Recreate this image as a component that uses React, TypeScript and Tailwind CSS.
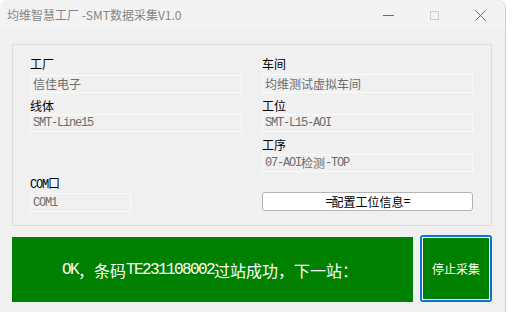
import React from 'react';

const cjk = "font-['Noto_Sans_CJK_SC',sans-serif]";

// SimSun-like look: ASCII runs in a half-width mono, CJK in Noto
function Mixed({ text }: { text: string }) {
  const parts = text.split(/([\x20-\x7e]+)/).filter(Boolean);
  return (
    <>
      {parts.map((p, i) =>
        /^[\x20-\x7e]+$/.test(p) ? (
          <span key={i} className="font-['Liberation_Mono',monospace] tracking-[-0.1em]">{p}</span>
        ) : (
          <span key={i}>{p}</span>
        )
      )}
    </>
  );
}

function Label({ text, className = '' }: { text: string; className?: string }) {
  return (
    <div className={`h-[12px] text-[12px] leading-[12px] text-black whitespace-nowrap ${className}`}>
      <Mixed text={text} />
    </div>
  );
}

function Field({ text, className = '' }: { text: string; className?: string }) {
  return (
    <div className={`h-[18px] border border-[#fafafa] bg-[#f0f0f0] pl-[2px] flex items-center text-[12px] leading-[12px] text-[#6d6d6d] whitespace-nowrap ${className}`}>
      <Mixed text={text} />
    </div>
  );
}

export default function App() {
  return (
    <div className={`w-[518px] h-[312px] bg-white overflow-hidden ${cjk}`}>
      <div className="w-[506px] h-[312px] bg-[#f0f0f0] border-r border-[#cfcfcf] rounded-t-[8px] overflow-hidden flex flex-col">
        {/* title bar */}
        <div className="h-[30px] bg-[#f3f3f3] flex items-center">
          <div className="pl-[7px] text-[12px] text-[#858585] whitespace-nowrap">均维智慧工厂 -SMT数据采集V1.0</div>
          <div className="ml-auto flex items-center h-full">
            <div className="w-[46px] h-full flex items-center justify-center">
              <div className="w-[11px] h-px bg-[#6a6a6a]" />
            </div>
            <div className="w-[46px] h-full flex items-center justify-center">
              <div className="w-[9px] h-[9px] border border-[#cfcfcf]" />
            </div>
            <div className="w-[46px] h-full flex items-center justify-center mr-[2px]">
              <svg width="11" height="11" viewBox="0 0 11 11">
                <path d="M0.5 0.5 L10.5 10.5 M10.5 0.5 L0.5 10.5" stroke="#6a6a6a" strokeWidth="1" fill="none" />
              </svg>
            </div>
          </div>
        </div>

        {/* group box */}
        <div className="ml-[12px] mt-[14px] w-[480px] h-[182px] border border-[#dcdcdc] pt-[13px] pl-[17px] flex gap-[20px]">
          <div className="w-[212px] flex flex-col">
            <Label text="工厂" />
            <Field text="信佳电子" className="mt-[5px]" />
            <Label text="线体" className="mt-[7px]" />
            <Field text="SMT-Line15" className="mt-[2px]" />
            <Label text="COM口" className="mt-[45px]" />
            <Field text="COM1" className="mt-[4px] w-[101px] h-[19px]" />
          </div>
          <div className="w-[211px] flex flex-col">
            <Label text="车间" />
            <Field text="均维测试虚拟车间" className="mt-[4px] h-[19px]" />
            <Label text="工位" className="mt-[7px]" />
            <Field text="SMT-L15-AOI" className="mt-[2px]" />
            <Label text="工序" className="mt-[7px]" />
            <Field text="07-AOI检测-TOP" className="mt-[3px]" />
            <button className="mt-[20px] h-[19px] bg-white border border-[#b4b4b4] rounded-[3px] flex items-center justify-center text-[12px] leading-[12px] text-black">
              <Mixed text="=配置工位信息=" />
            </button>
          </div>
        </div>

        {/* status + stop */}
        <div className="mt-[9px] ml-[12px] flex items-start gap-[7px]">
          <div className="mt-[2px] w-[401px] h-[65px] bg-[#008000] flex items-center pl-[50px] text-[16px] leading-[16px] text-white whitespace-nowrap">
            <Mixed text="OK，条码TE231108002过站成功，下一站：" />
          </div>
          <div className="w-[72px] h-[67px] border-2 border-[#0a74d6] rounded-[3px]">
            <div className="w-full h-full border border-white bg-[#008000] flex items-center justify-center text-[12px] text-white">
              停止采集
            </div>
          </div>
        </div>
      </div>
    </div>
  );
}
